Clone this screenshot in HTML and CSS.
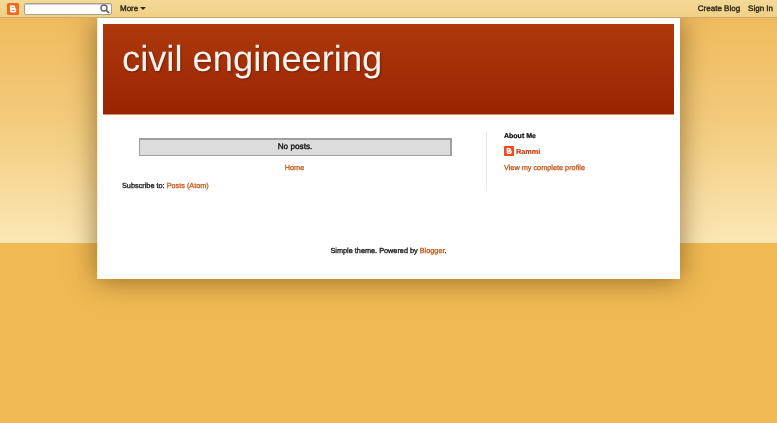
FILE: index.html
```html
<!DOCTYPE html>
<html lang="en">
<head>
<meta charset="utf-8">
<title>civil engineering</title>
<link rel="stylesheet" href="styles.css">
</head>
<body>
<nav class="navbar">
  <svg class="logo" viewBox="0 0 12 12" width="12" height="12"><rect width="12" height="12" rx="1.5" fill="#f4691f"/><path d="M3.2 2.4h3.2c1.1 0 1.8.8 1.8 1.8v.8c0 .3.2.5.5.5.3 0 .5.2.5.5v1.8c0 1.1-.9 1.8-1.9 1.8H4.9c-1.1 0-1.8-.8-1.8-1.8V3c0-.4 0-.6.1-.6z" fill="#fff"/><path d="M4.7 4.6h1.9M4.7 7.4h2.8" stroke="#f4691f" stroke-width=".9" fill="none"/></svg>
  <div class="search">
    <svg class="lens" viewBox="0 0 10 10" width="10" height="10"><circle cx="4" cy="4" r="3" fill="none" stroke="#666" stroke-width="1.4"/><path d="M6.2 6.2l3 3" stroke="#666" stroke-width="1.8"/></svg>
  </div>
  <a class="nav-link more">More<span class="caret"></span></a>
  <div class="nav-right">
    <a class="nav-link">Create Blog</a>
    <a class="nav-link">Sign In</a>
  </div>
</nav>
<main class="page">
  <header class="header"><h1 class="title">civil engineering</h1></header>
  <div class="columns">
    <section class="main-col">
      <div class="status">No posts.</div>
      <div class="home"><a class="link">Home</a></div>
      <div class="subscribe">Subscribe to: <a class="link">Posts (Atom)</a></div>
    </section>
    <aside class="side-col">
      <h2 class="side-title">About Me</h2>
      <div class="author">
        <svg class="logo-small" viewBox="0 0 12 12" width="10" height="10"><rect width="12" height="12" rx="1" fill="#f4491f"/><path d="M3.2 2.4h3.2c1.1 0 1.8.8 1.8 1.8v.8c0 .3.2.5.5.5.3 0 .5.2.5.5v1.8c0 1.1-.9 1.8-1.9 1.8H4.9c-1.1 0-1.8-.8-1.8-1.8V3c0-.4 0-.6.1-.6z" fill="#fff"/><path d="M4.7 4.6h1.9M4.7 7.4h2.8" stroke="#f4491f" stroke-width=".9" fill="none"/></svg>
        <a class="link author-name">Rammi</a>
      </div>
      <a class="link">View my complete profile</a>
    </aside>
  </div>
  <footer class="attribution">Simple theme. Powered by <a class="link">Blogger</a>.</footer>
</main>
</body>
</html>
```
FILE: styles.css
```css
html, body { margin: 0; padding: 0; }
body {
  height: 423px;
  overflow: hidden;
  font-family: "Liberation Sans", Arial, sans-serif;
  font-size: 7.3px;
  text-rendering: geometricPrecision;
  color: #222;
  background: linear-gradient(#f0bb5e 18px, #f3cb7c 120px, #fbe7b6 243px, #f0b953 243px) no-repeat;
  background-color: #f0b953;
}
.navbar {
  position: relative;
  z-index: 1;
  height: 17px;
  display: flex;
  align-items: center;
  padding: 0 4px 0 7px;
  background: linear-gradient(#f3d995, #f1d088);
  border-bottom: 1px solid #c8aa6a;
  filter: blur(0.35px);
}
.logo { flex: none; }
.search {
  width: 85px;
  height: 10px;
  margin-left: 5px;
  background: #fff;
  border: 1px solid #a9a08a;
  border-radius: 2px;
  display: flex;
  align-items: center;
  justify-content: flex-end;
  padding-right: 1px;
  box-shadow: inset 0 1px 1px #ccc;
}
.lens { display: block; }
.nav-link {
  font-size: 8px;
  color: #2a2516;
  -webkit-text-stroke: 0.35px #2a2516;
}
.more { margin-left: 8px; display: flex; align-items: center; }
.caret {
  margin-left: 2px;
  border-top: 3px solid #2a2516;
  border-left: 3px solid transparent;
  border-right: 3px solid transparent;
}
.nav-right { margin-left: auto; display: flex; gap: 8px; }
.page {
  width: 583px;
  height: 261px;
  margin: 0 auto;
  padding: 6px 6px 6px 5px;
  box-sizing: border-box;
  background: #fff;
  box-shadow: 0 1px 26px rgba(80, 50, 0, .6);
  border-left: 1px solid #f8eccb;
  display: flex;
  flex-direction: column;
}
.header {
  height: 91px;
  flex: none;
  background: linear-gradient(#af390d, #992400);
  border-bottom: 1px solid #d98d67;
  box-sizing: border-box;
  filter: blur(0.3px);
}
.title {
  margin: 0;
  padding: 15px 0 0 19px;
  font-size: 36.3px;
  line-height: 40px;
  font-weight: 400;
  color: #fbf4ee;
  text-shadow: 1px 1px 2px rgba(0, 0, 0, .3);
}
.columns {
  display: flex;
  margin-top: 17px;
  height: 59px;
  filter: blur(0.35px);
}
.main-col {
  width: 384px;
  box-sizing: border-box;
  padding-left: 19px;
  border-right: 1px solid #e8e8e8;
  flex: none;
}
.status {
  width: 313px;
  height: 18px;
  margin: 6px 0 0 17px;
  box-sizing: border-box;
  background: #dcdcdc;
  border: 1px solid #a0a0a0;
  border-top-width: 2px;
  border-right-width: 2px;
  text-align: center;
  font-size: 8.2px;
  line-height: 13px;
  color: #111;
  -webkit-text-stroke: 0.35px #111;
}
.home {
  text-align: center;
  margin-top: 6px;
  margin-left: 1px;
  width: 343px;
  line-height: 11px;
}
.subscribe { margin-top: 8px; line-height: 9px; -webkit-text-stroke: 0.35px #222; }
.link { color: #c4500f; -webkit-text-stroke: 0.25px #c4500f; }
.side-col { padding: 1px 0 0 17px; }
.side-title {
  margin: 0;
  font-size: 7px;
  line-height: 8px;
  color: #000;
  font-weight: 700;
  -webkit-text-stroke: 0.2px #000;
}
.author {
  display: flex;
  align-items: center;
  gap: 2px;
  margin: 5px 0 7px;
  height: 10px;
}
.logo-small { flex: none; }
.author-name { font-weight: 700; color: #c43a00; -webkit-text-stroke: 0.15px #c43a00; }
.attribution {
  margin-top: 55px;
  text-align: center;
  line-height: 10px;
  -webkit-text-stroke: 0.35px #222;
  filter: blur(0.35px);
}
```
